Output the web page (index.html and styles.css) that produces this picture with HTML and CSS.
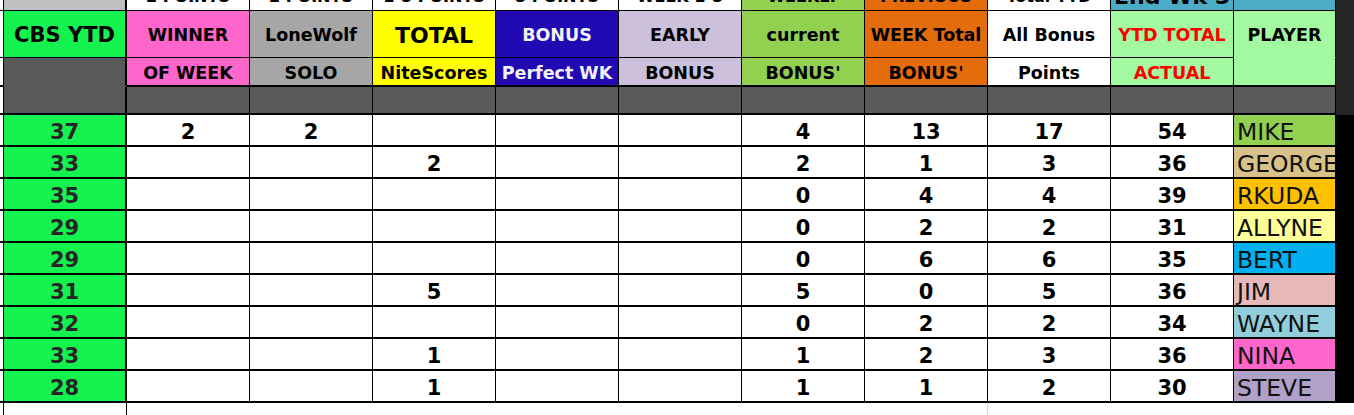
FILE: index.html
```html
<!DOCTYPE html>
<html>
<head>
<meta charset="utf-8">
<title>CBS YTD Bonus Sheet</title>
<link rel="stylesheet" href="styles.css">
</head>
<body>
<div class="sheet">
  <div class="row ra">
    <div class="stub"></div>
    <div class="c1 bg-lgray"></div>
    <div><span class="cut">2 POINTS</span></div>
    <div><span class="cut">2 POINTS</span></div>
    <div><span class="cut">1-5 POINTS</span></div>
    <div><span class="cut">5 POINTS</span></div>
    <div><span class="cut">WEEK 1-5</span></div>
    <div class="bg-green"><span class="cut">WEEKLY</span></div>
    <div class="bg-orange"><span class="cut">PREVIOUS</span></div>
    <div><span class="cut">Total YTD</span></div>
    <div class="bg-teal"><span class="cut big">End Wk 5</span></div>
    <div class="bg-teal"></div>
    <div class="strip"></div>
  </div>
  <div class="row rb">
    <div class="stub"></div>
    <div class="c1 bg-cbs"><span class="t-cbs">CBS YTD</span></div>
    <div class="bg-pink">WINNER</div>
    <div class="bg-gray">LoneWolf</div>
    <div class="bg-yellow"><span class="t-total">TOTAL</span></div>
    <div class="bg-blue">BONUS</div>
    <div class="bg-lav">EARLY</div>
    <div class="bg-green">current</div>
    <div class="bg-orange">WEEK Total</div>
    <div>All Bonus</div>
    <div class="bg-lgreen red">YTD TOTAL</div>
    <div class="bg-lgreen merge">PLAYER</div>
    <div class="strip"></div>
  </div>
  <div class="row rc">
    <div class="stub"></div>
    <div class="c1 bg-dark merge"></div>
    <div class="bg-pink">OF WEEK</div>
    <div class="bg-gray">SOLO</div>
    <div class="bg-yellow">NiteScores</div>
    <div class="bg-blue">Perfect WK</div>
    <div class="bg-lav">BONUS</div>
    <div class="bg-green">BONUS'</div>
    <div class="bg-orange">BONUS'</div>
    <div>Points</div>
    <div class="bg-lgreen red">ACTUAL</div>
    <div class="bg-lgreen"></div>
    <div class="strip"></div>
  </div>
  <div class="row rd">
    <div class="stub"></div>
    <div class="c1 bg-dark"></div>
    <div class="bg-dark"></div>
    <div class="bg-dark"></div>
    <div class="bg-dark"></div>
    <div class="bg-dark"></div>
    <div class="bg-dark"></div>
    <div class="bg-dark"></div>
    <div class="bg-dark"></div>
    <div class="bg-dark"></div>
    <div class="bg-dark"></div>
    <div class="bg-dark"></div>
    <div class="strip"></div>
  </div>

  <div class="row rdata">
    <div class="stub"></div><div class="c1 bg-cbs ytd">37</div>
    <div>2</div><div>2</div><div></div><div></div><div></div>
    <div>4</div><div>13</div><div>17</div><div>54</div>
    <div class="name p-mike">MIKE</div><div class="strip black"></div>
  </div>
  <div class="row rdata">
    <div class="stub"></div><div class="c1 bg-cbs ytd">33</div>
    <div></div><div></div><div>2</div><div></div><div></div>
    <div>2</div><div>1</div><div>3</div><div>36</div>
    <div class="name p-george">GEORGE</div><div class="strip black"></div>
  </div>
  <div class="row rdata">
    <div class="stub"></div><div class="c1 bg-cbs ytd">35</div>
    <div></div><div></div><div></div><div></div><div></div>
    <div>0</div><div>4</div><div>4</div><div>39</div>
    <div class="name p-rkuda">RKUDA</div><div class="strip black"></div>
  </div>
  <div class="row rdata">
    <div class="stub"></div><div class="c1 bg-cbs ytd">29</div>
    <div></div><div></div><div></div><div></div><div></div>
    <div>0</div><div>2</div><div>2</div><div>31</div>
    <div class="name p-allyne">ALLYNE</div><div class="strip black"></div>
  </div>
  <div class="row rdata">
    <div class="stub"></div><div class="c1 bg-cbs ytd">29</div>
    <div></div><div></div><div></div><div></div><div></div>
    <div>0</div><div>6</div><div>6</div><div>35</div>
    <div class="name p-bert">BERT</div><div class="strip black"></div>
  </div>
  <div class="row rdata">
    <div class="stub"></div><div class="c1 bg-cbs ytd">31</div>
    <div></div><div></div><div>5</div><div></div><div></div>
    <div>5</div><div>0</div><div>5</div><div>36</div>
    <div class="name p-jim">JIM</div><div class="strip black"></div>
  </div>
  <div class="row rdata">
    <div class="stub"></div><div class="c1 bg-cbs ytd">32</div>
    <div></div><div></div><div></div><div></div><div></div>
    <div>0</div><div>2</div><div>2</div><div>34</div>
    <div class="name p-wayne">WAYNE</div><div class="strip black"></div>
  </div>
  <div class="row rdata">
    <div class="stub"></div><div class="c1 bg-cbs ytd">33</div>
    <div></div><div></div><div>1</div><div></div><div></div>
    <div>1</div><div>2</div><div>3</div><div>36</div>
    <div class="name p-nina">NINA</div><div class="strip black"></div>
  </div>
  <div class="row rdata">
    <div class="stub"></div><div class="c1 bg-cbs ytd">28</div>
    <div></div><div></div><div>1</div><div></div><div></div>
    <div>1</div><div>1</div><div>2</div><div>30</div>
    <div class="name p-steve">STEVE</div><div class="strip black"></div>
  </div>

  <div class="row re">
    <div class="stub"></div><div class="c1"></div>
    <div></div><div></div><div></div><div></div><div></div>
    <div></div><div class="faint"></div><div></div><div></div>
    <div></div><div class="strip white"></div>
  </div>
</div>
</body>
</html>
```

FILE: styles.css
```css
* { box-sizing: border-box; }

html, body {
  margin: 0;
  padding: 0;
  background: #ffffff;
}

body {
  font-family: "DejaVu Sans", Verdana, sans-serif;
  font-weight: bold;
  font-size: 17.5px;
  color: #000;
  width: 1354px;
  height: 415px;
  overflow: hidden;
}

.sheet {
  display: flex;
  flex-direction: column;
}

.row {
  display: grid;
  grid-template-columns: 4px repeat(10, 123px) 102px 18px;
}

.row > div {
  display: flex;
  align-items: center;
  justify-content: center;
  overflow: hidden;
  white-space: nowrap;
  border-right: 1px solid #000;
  border-bottom: 1px solid #000;
  background: #fff;
}

.row > .c1 { border-right-width: 2px; }

.row > .strip {
  border: none;
  background: #262626;
  padding: 0;
}
.row > .strip.black { background: #000; }
.row > .strip.white { background: #fff; }

/* row heights */
.ra { height: 11px; }
.ra > div { align-items: flex-start; }
.rb { height: 47px; }
.rb > div { padding-top: 2px; }
.rc { height: 29px; }
.rc > div { border-bottom-width: 2px; padding-top: 3px; }
.rd { height: 28px; }
.rd > div { border-bottom-width: 2px; }
.rdata { height: 32px; }
.rdata > div { border-bottom-width: 2px; font-size: 21px; padding-top: 4px; }
.re { height: 12px; }
.re > div { border-bottom: none; border-right: none; }
.re > .stub, .re > .c1 { border-right: 1px solid #000; }
.re > .faint { border-right: 1px solid #d4d4d4; }

/* clipped top row text */
.cut {
  display: block;
  font-size: 16px;
  line-height: 16px;
  margin-top: -11px;
}
.cut.big {
  font-size: 22px;
  line-height: 22px;
  margin-top: -14px;
}

/* header text */
.t-cbs { font-size: 21px; }
.t-total { font-size: 22px; }
.red { color: #ff0000; }
.row > .merge { border-bottom-color: transparent; }
.rc > .merge { border-bottom-color: #595959; }
.rb > .merge { border-bottom-color: #a3f9a0; }

/* backgrounds */
.bg-lgray { background: #bfbfbf !important; }
.bg-cbs { background: #14f250 !important; }
.bg-pink { background: #ff66cc !important; }
.bg-gray { background: #a6a6a6 !important; }
.bg-yellow { background: #ffff00 !important; }
.bg-blue { background: #2109b4 !important; color: #f2f2f2; }
.bg-lav { background: #ccc0da !important; }
.bg-green { background: #92d050 !important; }
.bg-orange { background: #e46c0a !important; }
.bg-lgreen { background: #a3f9a0 !important; }
.bg-teal { background: #4bacc6 !important; }
.bg-dark { background: #595959 !important; }

.ytd { color: #262626; }

/* player names */
.rdata > .name {
  justify-content: flex-start;
  padding-left: 3px;
  padding-top: 3px;
  font-weight: normal;
  font-size: 23.5px;
  color: #111;
}
.p-mike { background: #92d050 !important; }
.p-george { background: #d8c28a !important; }
.p-rkuda { background: #ffc000 !important; }
.p-allyne { background: #ffff99 !important; }
.p-bert { background: #00b0f0 !important; }
.p-jim { background: #e6b9b8 !important; }
.p-wayne { background: #92cddc !important; }
.p-nina { background: #ff66cc !important; }
.p-steve { background: #b1a0c7 !important; }
```
